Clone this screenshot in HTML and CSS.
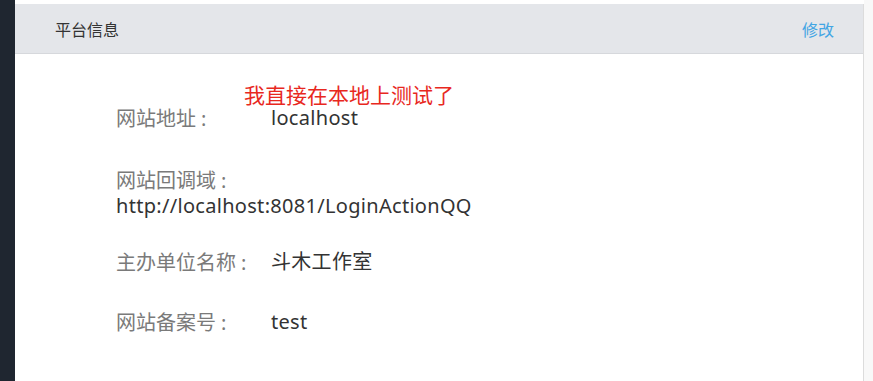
FILE: index.html
```html
<!DOCTYPE html>
<html lang="zh-CN">
<head>
<meta charset="utf-8">
<link rel="stylesheet" href="styles.css">
</head>
<body>
<div class="page">
  <div class="sidebar"></div>
  <div class="panel">
    <div class="panel-head">
      <span class="title">平台信息</span>
      <a class="edit">修改</a>
    </div>
    <div class="panel-body">
      <div class="note">我直接在本地上测试了</div>
      <div class="row r1"><span class="label">网站地址<span class="colon">:</span></span><span class="value">localhost</span></div>
      <div class="row r2 stack"><div class="label">网站回调域<span class="colon">:</span></div><div class="value">http://localhost:8081/LoginActionQQ</div></div>
      <div class="row r3"><span class="label">主办单位名称<span class="colon">:</span></span><span class="value">斗木工作室</span></div>
      <div class="row r4"><span class="label">网站备案号<span class="colon">:</span></span><span class="value">test</span></div>
    </div>
  </div>
  <div class="rest"></div>
</div>
</body>
</html>
```
FILE: styles.css
```css
html, body { margin: 0; padding: 0; }
body {
  font-family: "Noto Sans", "Noto Sans CJK SC", sans-serif;
  background: #fff;
  width: 873px;
  height: 381px;
  overflow: hidden;
}
.page { display: flex; height: 381px; }
.sidebar { width: 15px; background: #1f2630; flex: none; }
.panel {
  width: 848px;
  flex: none;
  margin-top: 4px;
  background: #fff;
  border-right: 1px solid #dcdcdc;
}
.rest { flex: 1; background: #f8f8f8; }
.panel-head {
  height: 49px;
  background: #e4e6ea;
  border-bottom: 1px solid #d6d8dc;
  display: flex;
  align-items: center;
  justify-content: space-between;
  padding: 0 29px 0 40px;
}
.title { font-size: 16px; color: #333; font-family: "Noto Sans CJK SC", sans-serif; }
.edit { font-size: 16px; color: #42a5e4; font-family: "Noto Sans CJK SC", sans-serif; }
.panel-body { position: relative; padding: 51px 0 0 101px; }
.note {
  position: absolute;
  left: 229px;
  top: 30px;
  font-size: 21px;
  line-height: 21px;
  color: #e8281e;
  font-family: "Noto Sans CJK SC", sans-serif;
}
.row { font-size: 20px; line-height: 25px; display: flex; }
.row.stack { display: block; }
.label { color: #7a7a7a; width: 155px; flex: none; font-family: "Noto Sans CJK SC", sans-serif; }
.colon { margin-left: 5px; font-family: "Noto Sans", sans-serif; }
.value { color: #333; letter-spacing: 0.3px; font-family: "Noto Sans", "Noto Sans CJK SC", sans-serif; }
.r2 { margin-top: 36px; }
.r3 { margin-top: 31px; }
.r4 { margin-top: 34px; }
```
